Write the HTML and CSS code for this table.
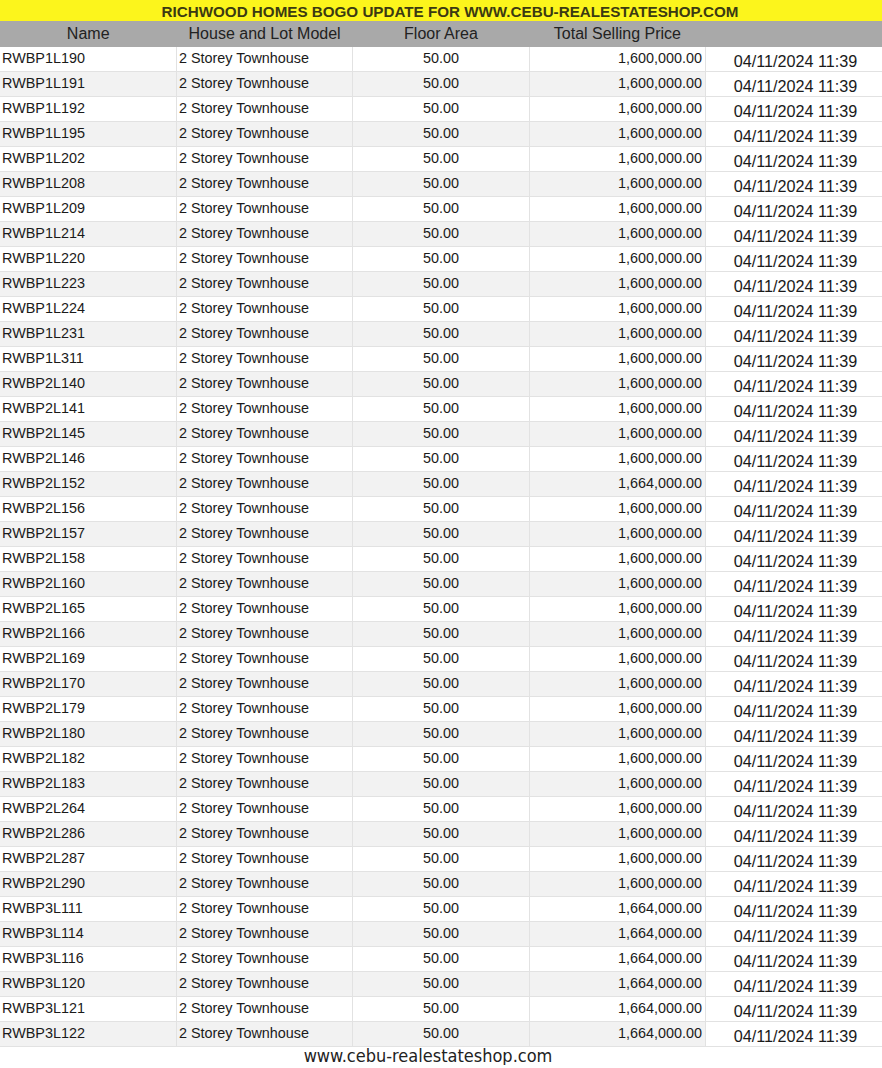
FILE: index.html
```html
<!DOCTYPE html>
<html lang="en">

<head>
    <meta charset="UTF-8">
    <meta name="viewport" content="width=device-width, initial-scale=1.0">
    <title>Richwood Homes BOGO Update</title>
    <link rel="stylesheet" href="styles.css">
</head>

<body>
    <!-- Title bar -->
    <div class="title-bar">RICHWOOD HOMES BOGO UPDATE FOR WWW.CEBU-REALESTATESHOP.COM</div>

    <!-- Inventory table -->
    <table class="inventory">
        <thead>
            <tr>
                <th>Name</th>
                <th>House and Lot Model</th>
                <th>Floor Area</th>
                <th>Total Selling Price</th>
                <th></th>
            </tr>
        </thead>
        <tbody>
            <tr><td class="name">RWBP1L190</td><td class="model">2 Storey Townhouse</td><td class="area">50.00</td><td class="price">1,600,000.00</td><td class="date">04/11/2024 11:39</td></tr>
            <tr><td class="name">RWBP1L191</td><td class="model">2 Storey Townhouse</td><td class="area">50.00</td><td class="price">1,600,000.00</td><td class="date">04/11/2024 11:39</td></tr>
            <tr><td class="name">RWBP1L192</td><td class="model">2 Storey Townhouse</td><td class="area">50.00</td><td class="price">1,600,000.00</td><td class="date">04/11/2024 11:39</td></tr>
            <tr><td class="name">RWBP1L195</td><td class="model">2 Storey Townhouse</td><td class="area">50.00</td><td class="price">1,600,000.00</td><td class="date">04/11/2024 11:39</td></tr>
            <tr><td class="name">RWBP1L202</td><td class="model">2 Storey Townhouse</td><td class="area">50.00</td><td class="price">1,600,000.00</td><td class="date">04/11/2024 11:39</td></tr>
            <tr><td class="name">RWBP1L208</td><td class="model">2 Storey Townhouse</td><td class="area">50.00</td><td class="price">1,600,000.00</td><td class="date">04/11/2024 11:39</td></tr>
            <tr><td class="name">RWBP1L209</td><td class="model">2 Storey Townhouse</td><td class="area">50.00</td><td class="price">1,600,000.00</td><td class="date">04/11/2024 11:39</td></tr>
            <tr><td class="name">RWBP1L214</td><td class="model">2 Storey Townhouse</td><td class="area">50.00</td><td class="price">1,600,000.00</td><td class="date">04/11/2024 11:39</td></tr>
            <tr><td class="name">RWBP1L220</td><td class="model">2 Storey Townhouse</td><td class="area">50.00</td><td class="price">1,600,000.00</td><td class="date">04/11/2024 11:39</td></tr>
            <tr><td class="name">RWBP1L223</td><td class="model">2 Storey Townhouse</td><td class="area">50.00</td><td class="price">1,600,000.00</td><td class="date">04/11/2024 11:39</td></tr>
            <tr><td class="name">RWBP1L224</td><td class="model">2 Storey Townhouse</td><td class="area">50.00</td><td class="price">1,600,000.00</td><td class="date">04/11/2024 11:39</td></tr>
            <tr><td class="name">RWBP1L231</td><td class="model">2 Storey Townhouse</td><td class="area">50.00</td><td class="price">1,600,000.00</td><td class="date">04/11/2024 11:39</td></tr>
            <tr><td class="name">RWBP1L311</td><td class="model">2 Storey Townhouse</td><td class="area">50.00</td><td class="price">1,600,000.00</td><td class="date">04/11/2024 11:39</td></tr>
            <tr><td class="name">RWBP2L140</td><td class="model">2 Storey Townhouse</td><td class="area">50.00</td><td class="price">1,600,000.00</td><td class="date">04/11/2024 11:39</td></tr>
            <tr><td class="name">RWBP2L141</td><td class="model">2 Storey Townhouse</td><td class="area">50.00</td><td class="price">1,600,000.00</td><td class="date">04/11/2024 11:39</td></tr>
            <tr><td class="name">RWBP2L145</td><td class="model">2 Storey Townhouse</td><td class="area">50.00</td><td class="price">1,600,000.00</td><td class="date">04/11/2024 11:39</td></tr>
            <tr><td class="name">RWBP2L146</td><td class="model">2 Storey Townhouse</td><td class="area">50.00</td><td class="price">1,600,000.00</td><td class="date">04/11/2024 11:39</td></tr>
            <tr><td class="name">RWBP2L152</td><td class="model">2 Storey Townhouse</td><td class="area">50.00</td><td class="price">1,664,000.00</td><td class="date">04/11/2024 11:39</td></tr>
            <tr><td class="name">RWBP2L156</td><td class="model">2 Storey Townhouse</td><td class="area">50.00</td><td class="price">1,600,000.00</td><td class="date">04/11/2024 11:39</td></tr>
            <tr><td class="name">RWBP2L157</td><td class="model">2 Storey Townhouse</td><td class="area">50.00</td><td class="price">1,600,000.00</td><td class="date">04/11/2024 11:39</td></tr>
            <tr><td class="name">RWBP2L158</td><td class="model">2 Storey Townhouse</td><td class="area">50.00</td><td class="price">1,600,000.00</td><td class="date">04/11/2024 11:39</td></tr>
            <tr><td class="name">RWBP2L160</td><td class="model">2 Storey Townhouse</td><td class="area">50.00</td><td class="price">1,600,000.00</td><td class="date">04/11/2024 11:39</td></tr>
            <tr><td class="name">RWBP2L165</td><td class="model">2 Storey Townhouse</td><td class="area">50.00</td><td class="price">1,600,000.00</td><td class="date">04/11/2024 11:39</td></tr>
            <tr><td class="name">RWBP2L166</td><td class="model">2 Storey Townhouse</td><td class="area">50.00</td><td class="price">1,600,000.00</td><td class="date">04/11/2024 11:39</td></tr>
            <tr><td class="name">RWBP2L169</td><td class="model">2 Storey Townhouse</td><td class="area">50.00</td><td class="price">1,600,000.00</td><td class="date">04/11/2024 11:39</td></tr>
            <tr><td class="name">RWBP2L170</td><td class="model">2 Storey Townhouse</td><td class="area">50.00</td><td class="price">1,600,000.00</td><td class="date">04/11/2024 11:39</td></tr>
            <tr><td class="name">RWBP2L179</td><td class="model">2 Storey Townhouse</td><td class="area">50.00</td><td class="price">1,600,000.00</td><td class="date">04/11/2024 11:39</td></tr>
            <tr><td class="name">RWBP2L180</td><td class="model">2 Storey Townhouse</td><td class="area">50.00</td><td class="price">1,600,000.00</td><td class="date">04/11/2024 11:39</td></tr>
            <tr><td class="name">RWBP2L182</td><td class="model">2 Storey Townhouse</td><td class="area">50.00</td><td class="price">1,600,000.00</td><td class="date">04/11/2024 11:39</td></tr>
            <tr><td class="name">RWBP2L183</td><td class="model">2 Storey Townhouse</td><td class="area">50.00</td><td class="price">1,600,000.00</td><td class="date">04/11/2024 11:39</td></tr>
            <tr><td class="name">RWBP2L264</td><td class="model">2 Storey Townhouse</td><td class="area">50.00</td><td class="price">1,600,000.00</td><td class="date">04/11/2024 11:39</td></tr>
            <tr><td class="name">RWBP2L286</td><td class="model">2 Storey Townhouse</td><td class="area">50.00</td><td class="price">1,600,000.00</td><td class="date">04/11/2024 11:39</td></tr>
            <tr><td class="name">RWBP2L287</td><td class="model">2 Storey Townhouse</td><td class="area">50.00</td><td class="price">1,600,000.00</td><td class="date">04/11/2024 11:39</td></tr>
            <tr><td class="name">RWBP2L290</td><td class="model">2 Storey Townhouse</td><td class="area">50.00</td><td class="price">1,600,000.00</td><td class="date">04/11/2024 11:39</td></tr>
            <tr><td class="name">RWBP3L111</td><td class="model">2 Storey Townhouse</td><td class="area">50.00</td><td class="price">1,664,000.00</td><td class="date">04/11/2024 11:39</td></tr>
            <tr><td class="name">RWBP3L114</td><td class="model">2 Storey Townhouse</td><td class="area">50.00</td><td class="price">1,664,000.00</td><td class="date">04/11/2024 11:39</td></tr>
            <tr><td class="name">RWBP3L116</td><td class="model">2 Storey Townhouse</td><td class="area">50.00</td><td class="price">1,664,000.00</td><td class="date">04/11/2024 11:39</td></tr>
            <tr><td class="name">RWBP3L120</td><td class="model">2 Storey Townhouse</td><td class="area">50.00</td><td class="price">1,664,000.00</td><td class="date">04/11/2024 11:39</td></tr>
            <tr><td class="name">RWBP3L121</td><td class="model">2 Storey Townhouse</td><td class="area">50.00</td><td class="price">1,664,000.00</td><td class="date">04/11/2024 11:39</td></tr>
            <tr><td class="name">RWBP3L122</td><td class="model">2 Storey Townhouse</td><td class="area">50.00</td><td class="price">1,664,000.00</td><td class="date">04/11/2024 11:39</td></tr>
        </tbody>
    </table>

    <!-- Watermark footer -->
    <div class="site-footer">www.cebu-realestateshop.com</div>
</body>

</html>
```

FILE: styles.css
```css
body {
    margin: 0;
    background-color: #ffffff;
    color: #1a1a1a;
    font-family: 'Liberation Sans', Arial, sans-serif;
}

.title-bar {
    height: 21px;
    line-height: 23px;
    background-color: #fcf51c;
    color: #3b3a12;
    font-size: 15.2px;
    font-weight: bold;
    text-align: center;
    padding-left: 18px;
    overflow: hidden;
}

.inventory {
    width: 882px;
    table-layout: fixed;
    border-collapse: collapse;
    font-size: 14.4px;
}

.inventory th {
    height: 24px;
    padding: 0;
    background-color: #a9a9a9;
    color: #222222;
    font-size: 16px;
    font-weight: normal;
    text-align: center;
    line-height: 26px;
}

.inventory td {
    height: 24.9px;
    box-sizing: border-box;
    padding: 0 3px 2px 3px;
    border-bottom: 1px solid #e2e2e2;
    border-left: 1px solid #e2e2e2;
    white-space: nowrap;
    vertical-align: middle;
}

.inventory tbody tr:nth-child(even) td {
    background-color: #f2f2f2;
}

.inventory td.name {
    border-left: none;
    padding-left: 2px;
}

.inventory td.model {
    padding-left: 2px;
}

.inventory td.area {
    text-align: center;
}

.inventory td.price {
    text-align: right;
}

/* date column sits a little lower and larger, always white */
.inventory td.date,
.inventory tbody tr:nth-child(even) td.date {
    background-color: #ffffff;
    font-size: 16.2px;
    text-align: center;
    padding-top: 5px;
    padding-bottom: 1px;
    padding-left: 6px;
    line-height: 18px;
}

.site-footer {
    text-align: center;
    padding-right: 26px;
    font-family: 'Liberation Sans Narrow', 'DejaVu Sans Condensed', sans-serif;
    font-size: 18px;
    line-height: 18px;
    color: #222222;
}
```
